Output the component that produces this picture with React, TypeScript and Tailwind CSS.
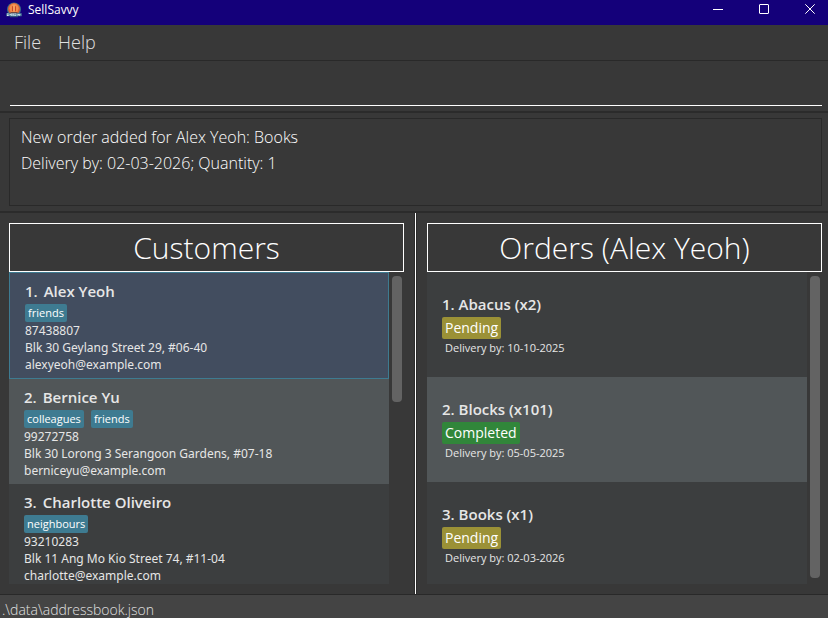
import React from "react";

type Customer = {
  name: string;
  tags: string[];
  phone: string;
  address: string;
  email: string;
};

type Order = {
  item: string;
  quantity: number;
  status: "Pending" | "Completed";
  delivery: string;
};

const customers: Customer[] = [
  {
    name: "Alex Yeoh",
    tags: ["friends"],
    phone: "87438807",
    address: "Blk 30 Geylang Street 29, #06-40",
    email: "alexyeoh@example.com",
  },
  {
    name: "Bernice Yu",
    tags: ["colleagues", "friends"],
    phone: "99272758",
    address: "Blk 30 Lorong 3 Serangoon Gardens, #07-18",
    email: "berniceyu@example.com",
  },
  {
    name: "Charlotte Oliveiro",
    tags: ["neighbours"],
    phone: "93210283",
    address: "Blk 11 Ang Mo Kio Street 74, #11-04",
    email: "charlotte@example.com",
  },
];

const orders: Order[] = [
  { item: "Abacus", quantity: 2, status: "Pending", delivery: "10-10-2025" },
  { item: "Blocks", quantity: 101, status: "Completed", delivery: "05-05-2025" },
  { item: "Books", quantity: 1, status: "Pending", delivery: "02-03-2026" },
];

function Logo() {
  return (
    <svg className="h-4 w-4" viewBox="0 0 16 16" aria-hidden="true">
      <circle cx="8" cy="7.500" r="7" fill="#3a6f88" />
      <circle cx="8" cy="7" r="6" fill="#d9603a" />
      <path d="M8 1.800c2.900 0 4.600 2.200 4.600 4.800l-1.400 3.800H4.800L3.400 6.600C3.400 4 5.100 1.800 8 1.800z" fill="#f28c4a" />
      <path d="M6 4.200h1v5H6zM9 4.200h1v5H9z" fill="#c9472a" />
      <path d="M7.500 3h1v6.500h-1z" fill="#f9b070" />
      <path d="M4.500 10h7v1.200h-7z" fill="#6e4a44" />
      <path d="M.3 11.200h15.400v3H.3z" fill="#4b7f9b" />
      <path
        d="M1 12h1.600M1 13.500h1.600M3.600 12.700h1.400M5.800 11.500v2.400M7.200 11.500v2.400M8.400 12h1.400M8.400 13.500h1.400M10.600 12.900h1.200M12.400 12l.8 1.500.9-1.500"
        stroke="#f0f6f9"
        strokeWidth=".9"
        fill="none"
      />
      <path d="M4 14.200h8v1H4z" fill="#35617c" />
    </svg>
  );
}

function TitleBar() {
  const control = "flex h-[18px] w-[46px] items-center justify-center";
  return (
    <header className="flex h-[25px] items-start justify-between bg-[#14007a] text-white">
      <div className="flex items-center gap-[6px] pl-[6px] pt-px">
        <Logo />
        <h1 className="text-[12px] leading-[18px]">SellSavvy</h1>
      </div>
      <div className="-mr-[5px] flex shrink-0">
        <button className={control} aria-label="Minimize">
          <svg width="10" height="10" viewBox="0 0 10 10" shapeRendering="crispEdges">
            <path d="M0 5h10v1H0z" fill="#fff" />
          </svg>
        </button>
        <button className={control} aria-label="Maximize">
          <svg width="10" height="10" viewBox="0 0 10 10" fill="none" stroke="#fff">
            <rect x=".5" y=".5" width="9" height="9" rx=".5" />
          </svg>
        </button>
        <button className={control} aria-label="Close">
          <svg width="10" height="10" viewBox="0 0 10 10" fill="none" stroke="#fff">
            <path d="M.3.3l9.400 9.400M9.700.3L.3 9.700" />
          </svg>
        </button>
      </div>
    </header>
  );
}

function PanelTitle({ children }: { children: React.ReactNode }) {
  return (
    <h2 className="border border-white text-center text-[30px] font-light leading-[47px] text-white">
      {children}
    </h2>
  );
}

function CustomerCard({ customer, index }: { customer: Customer; index: number }) {
  const tone =
    index === 0
      ? "border border-[#3e7b91] bg-[#424d5f]"
      : index % 2 === 1
        ? "bg-[#515658]"
        : "bg-[#3c3e3f]";
  return (
    <li className={`shrink-0 py-[5px] pl-[15px] ${tone}`}>
      <h3 className="text-[15px] font-semibold leading-[26px]">
        <span className="mr-[6px]">{index + 1}.</span>
        {customer.name}
      </h3>
      <div className="flex gap-[7px]">
        {customer.tags.map((tag) => (
          <span key={tag} className="rounded-xs bg-[#3e7b91] px-[3px] text-[11px] leading-[18px] text-white">
            {tag}
          </span>
        ))}
      </div>
      <div className="font-['Noto_Sans',sans-serif] text-[12px] leading-[17px]">
        <p>{customer.phone}</p>
        <p>{customer.address}</p>
        <p>{customer.email}</p>
      </div>
    </li>
  );
}

function OrderCard({ order, index }: { order: Order; index: number }) {
  return (
    <li className={`shrink-0 py-5 pl-[15px] ${index % 2 === 1 ? "bg-[#515658]" : "bg-[#3c3e3f]"}`}>
      <h3 className="pb-px text-[15px] font-semibold leading-[24px]">
        {index + 1}. {order.item} (x{order.quantity})
      </h3>
      <div className="flex">
        <span
          className={`rounded-xs px-[3px] text-[14px] font-medium leading-[22px] text-white ${
            order.status === "Pending" ? "bg-[#9b9136]" : "bg-[#31863a]"
          }`}
        >
          {order.status}
        </span>
      </div>
      <p className="pl-[3px] text-[11px] font-medium leading-[18px]">Delivery by: {order.delivery}</p>
    </li>
  );
}

function Panel({ title, thumb, children }: { title: string; thumb: string; children: React.ReactNode }) {
  return (
    <section className="flex min-w-0 flex-1 flex-col py-[10px]">
      <PanelTitle>{title}</PanelTitle>
      <div className="flex min-h-0 flex-1">
        <ul className="flex h-[312px] min-w-0 flex-1 flex-col overflow-hidden">{children}</ul>
        <div className="w-[15px] shrink-0 pb-[6px] pl-[3px] pr-[2px] pt-1">
          <div className={`rounded-sm bg-[#636363] ${thumb}`} />
        </div>
      </div>
    </section>
  );
}

export default function App() {
  return (
    <div className="flex min-h-screen flex-col bg-[#383838] font-['Open_Sans','Noto_Sans',sans-serif] text-[#e6e6e6]">
      <TitleBar />
      <nav className="flex h-9 items-center gap-[17px] border-b border-[#292929] pl-[14px] text-[18px] font-light text-[#e0e0e0]">
        <button>File</button>
        <button>Help</button>
      </nav>
      <div className="border-b-2 border-[#2b2b2b] pb-[5px] pl-[10px] pr-[6px]">
        <input
          aria-label="Command"
          className="block h-[45px] w-full border-b border-white bg-transparent text-[17px] font-light text-white outline-none"
        />
      </div>
      <div className="border-b-2 border-[#2b2b2b] pb-[5px] pl-[9px] pr-[6px] pt-[5px]">
        <textarea
          readOnly
          aria-label="Result"
          className="block h-[88px] w-full resize-none overflow-hidden border border-[#292929] bg-transparent px-[11px] py-[5px] text-[16px] font-light leading-[26px] text-white outline-none"
          value={"New order added for Alex Yeoh: Books\nDelivery by: 02-03-2026; Quantity: 1"}
        />
      </div>
      <main className="flex flex-1">
        <div className="flex min-w-0 flex-1 border-r border-[#2b2b2b] pl-[9px] pr-[10px]">
          <Panel title="Customers" thumb="h-[126px]">
            {customers.map((customer, i) => (
              <CustomerCard key={customer.name} customer={customer} index={i} />
            ))}
          </Panel>
        </div>
        <div className="w-px bg-white" />
        <div className="flex min-w-0 flex-1 border-l border-[#2b2b2b] pl-[10px] pr-[6px]">
          <Panel title="Orders (Alex Yeoh)" thumb="h-full">
            {orders.map((order, i) => (
              <OrderCard key={order.item} order={order} index={i} />
            ))}
          </Panel>
        </div>
      </main>
      <footer className="h-6 border-t border-[#292929] bg-[#444444] pl-[2px] text-[14px] font-light leading-[29px] text-[#e0e0e0]">
        .\data\addressbook.json
      </footer>
    </div>
  );
}
